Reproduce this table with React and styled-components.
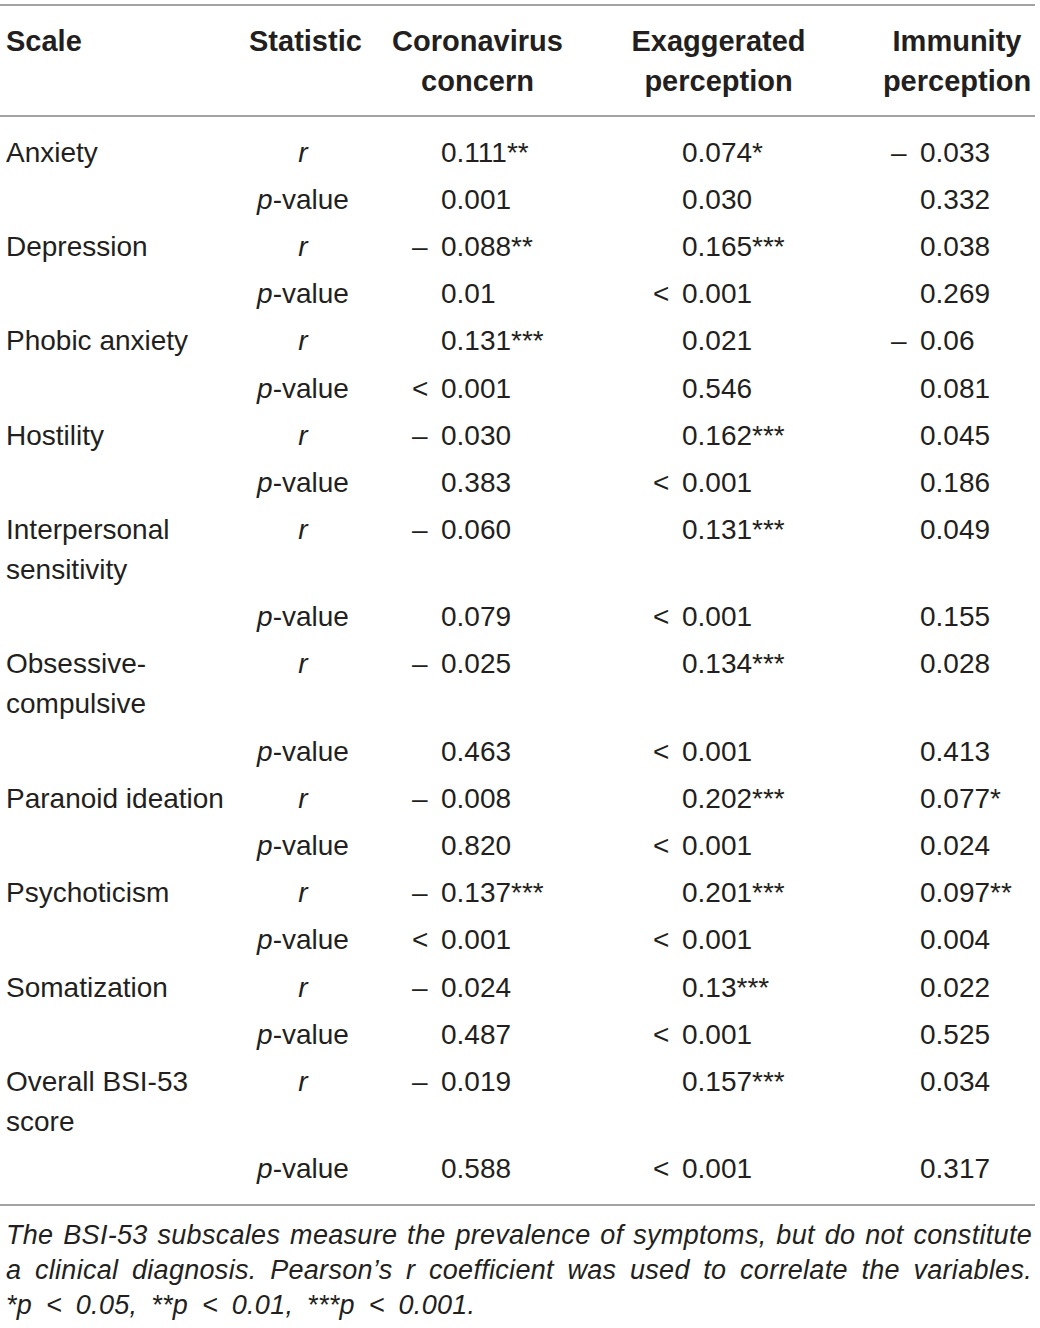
import React from 'react';
import styled, { createGlobalStyle } from 'styled-components';

const GlobalStyle = createGlobalStyle`
  body {
    margin: 0;
    background: #fff;
    color: #231f20;
    font-family: "Liberation Sans", Arial, sans-serif;
  }
`;

const cols = '249px 108px 241px 241px 1fr';

const Page = styled.div`
  width: 1035px;
  padding-top: 4px;
`;

const Rule = styled.div`
  height: 2px;
  background: #a3a3a3;
`;

const HeadRow = styled.div`
  display: grid;
  grid-template-columns: ${cols};
  padding: 15px 0 14px;
  font-weight: bold;
  font-size: 29px;
  line-height: 40px;
`;

const HeadCell = styled.div`
  text-align: ${(p) => (p.$left ? 'left' : 'center')};
  padding-left: ${(p) => p.$shift || 0}px;
`;

const Body = styled.div`
  padding: 12px 0 11px;
`;

const Row = styled.div`
  display: grid;
  grid-template-columns: ${cols};
  padding: 3.6px 0;
  font-size: 28px;
  line-height: 40px;
`;

const Label = styled.div`
  padding: 0 4px 0 6px;
`;

const Stat = styled.div`
  text-align: center;
`;

const Value = styled.div`
  padding-left: ${(p) => p.$pad}px;
  white-space: nowrap;
`;

const Prefix = styled.span`
  display: inline-block;
  width: 29px;
  margin-left: -29px;
`;

const Note = styled.div`
  padding: 12px 3px 0 6px;
  font-style: italic;
  font-size: 27px;
  letter-spacing: 0.3px;
  line-height: 35px;
`;

const NoteLine = styled.div`
  white-space: nowrap;
  text-align: left;
  text-align-last: ${(p) => (p.$justify ? 'justify' : 'left')};
  word-spacing: ${(p) => (p.$loose ? '6px' : 'normal')};
`;

const rows = [
  ['Anxiety', ['0.111**', '0.074*', '–0.033'], ['0.001', '0.030', '0.332']],
  ['Depression', ['–0.088**', '0.165***', '0.038'], ['0.01', '< 0.001', '0.269']],
  ['Phobic anxiety', ['0.131***', '0.021', '–0.06'], ['< 0.001', '0.546', '0.081']],
  ['Hostility', ['–0.030', '0.162***', '0.045'], ['0.383', '< 0.001', '0.186']],
  ['Interpersonal sensitivity', ['–0.060', '0.131***', '0.049'], ['0.079', '< 0.001', '0.155']],
  ['Obsessive-compulsive', ['–0.025', '0.134***', '0.028'], ['0.463', '< 0.001', '0.413']],
  ['Paranoid ideation', ['–0.008', '0.202***', '0.077*'], ['0.820', '< 0.001', '0.024']],
  ['Psychoticism', ['–0.137***', '0.201***', '0.097**'], ['< 0.001', '< 0.001', '0.004']],
  ['Somatization', ['–0.024', '0.13***', '0.022'], ['0.487', '< 0.001', '0.525']],
  ['Overall BSI-53 score', ['–0.019', '0.157***', '0.034'], ['0.588', '< 0.001', '0.317']],
];

const pads = [84, 84, 81];

const Num = ({ text, pad }) => {
  let prefix = null;
  let rest = text;
  if (text.startsWith('–')) {
    prefix = '–';
    rest = text.slice(1);
  } else if (text.startsWith('< ')) {
    prefix = '<';
    rest = text.slice(2);
  }
  return (
    <Value $pad={pad}>
      {prefix && <Prefix>{prefix}</Prefix>}
      {rest}
    </Value>
  );
};

const App = () => {
  return (
    <Page>
      <GlobalStyle />
      <Rule />
      <HeadRow>
        <HeadCell $left $shift={6}>Scale</HeadCell>
        <HeadCell>Statistic</HeadCell>
        <HeadCell>Coronavirus<br />concern</HeadCell>
        <HeadCell>Exaggerated<br />perception</HeadCell>
        <HeadCell $shift={40}>Immunity<br />perception</HeadCell>
      </HeadRow>
      <Rule />
      <Body>
        {rows.map(([label, r, p]) => (
          <React.Fragment key={label}>
            <Row>
              <Label>{label}</Label>
              <Stat><i>r</i></Stat>
              {r.map((v, i) => <Num key={i} text={v} pad={pads[i]} />)}
            </Row>
            <Row>
              <Label />
              <Stat><i>p</i>-value</Stat>
              {p.map((v, i) => <Num key={i} text={v} pad={pads[i]} />)}
            </Row>
          </React.Fragment>
        ))}
      </Body>
      <Rule />
      <Note>
        <NoteLine $justify>The BSI-53 subscales measure the prevalence of symptoms, but do not constitute</NoteLine>
        <NoteLine $justify>a clinical diagnosis. Pearson’s r coefficient was used to correlate the variables.</NoteLine>
        <NoteLine $loose>*p &lt; 0.05, **p &lt; 0.01, ***p &lt; 0.001.</NoteLine>
      </Note>
    </Page>
  );
};

export default App;
